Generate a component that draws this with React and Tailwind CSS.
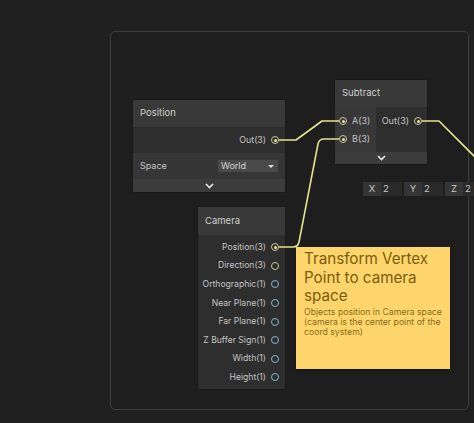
import React from 'react';

const font = { fontFamily: 'Inter, "Noto Sans", sans-serif' };

function Port({ kind = 'vec', connected = false }) {
    const ring = kind === 'vec' ? 'border-[#c9c98f]' : 'border-[#7fb8cc]';
    return (
        <span className={`w-[8px] h-[8px] rounded-full border-[1.5px] ${ring} flex items-center justify-center shrink-0`}>
            {connected && <span className="w-[3px] h-[3px] rounded-full bg-[#e4e4b0]" />}
        </span>
    );
}

function Chevron() {
    return (
        <svg width="9" height="6" viewBox="0 0 9 6">
            <polyline points="1,1 4.5,4.5 8,1" fill="none" stroke="#e8e8e8" strokeWidth="1.6" />
        </svg>
    );
}

function OutRow({ label, kind, connected, h = 'h-[18.6px]' }) {
    return (
        <div className={`flex items-center justify-end gap-[5px] pr-[6px] ${h}`}>
            <span className="text-[8.6px] text-[#c4c4c4]">{label}</span>
            <Port kind={kind} connected={connected} />
        </div>
    );
}

export default function App() {
    const cameraOuts = [
        ['Position(3)', 'vec', true],
        ['Direction(3)', 'vec', false],
        ['Orthographic(1)', 'f', false],
        ['Near Plane(1)', 'f', false],
        ['Far Plane(1)', 'f', false],
        ['Z Buffer Sign(1)', 'f', false],
        ['Width(1)', 'f', false],
        ['Height(1)', 'f', false],
    ];

    return (
        <div className="relative w-[474px] h-[423px] bg-[#202020] overflow-hidden" style={font}>
            {/* Grupo */}
            <div className="absolute left-[110px] top-[31px] w-[359px] h-[379px] rounded-[5px] border-[1.5px] border-[#3d3d3d] bg-[#1e1e1e]" />

            {/* Nodo Position */}
            <div className="absolute left-[133px] top-[100px] w-[152px] flex flex-col shadow-[0_0_0_1px_#1a1a1a]">
                <div className="h-[27px] bg-[#393939] flex items-center px-[7px] text-[9.5px] text-[#cfcfcf]">Position</div>
                <div className="h-[26px] bg-[#2e2e2e] flex items-center justify-end gap-[5px] pr-[6px]">
                    <span className="text-[8.8px] text-[#c4c4c4]">Out(3)</span>
                    <Port connected />
                </div>
                <div className="h-[26px] bg-[#363636] flex items-center justify-between pl-[7px] pr-[7px]">
                    <span className="text-[9px] text-[#c4c4c4]">Space</span>
                    <div className="w-[60px] h-[12px] bg-[#4a4a4a] flex items-center justify-between px-[3px]">
                        <span className="text-[9px] text-[#d4d4d4]">World</span>
                        <span className="w-0 h-0 border-l-[3px] border-r-[3px] border-t-[3px] border-l-transparent border-r-transparent border-t-[#dcdcdc] mr-[1px]" />
                    </div>
                </div>
                <div className="h-[13px] bg-[#3c3c3c] flex items-center justify-center"><Chevron /></div>
            </div>

            {/* Nodo Subtract */}
            <div className="absolute left-[335px] top-[80px] w-[92px] flex flex-col shadow-[0_0_0_1px_#1a1a1a]">
                <div className="h-[27px] bg-[#393939] flex items-center px-[7px] text-[9.5px] text-[#cfcfcf]">Subtract</div>
                <div className="h-[45px] flex">
                    <div className="w-[41px] bg-[#383838] flex flex-col pt-[5px]">
                        {['A(3)', 'B(3)'].map((l) => (
                            <div key={l} className="h-[18px] flex items-center gap-[5px] pl-[4px]">
                                <Port connected />
                                <span className="text-[9px] text-[#c4c4c4]">{l}</span>
                            </div>
                        ))}
                    </div>
                    <div className="flex-1 bg-[#2e2e2e] pt-[5px]">
                        <div className="h-[18px] flex items-center justify-end gap-[5px] pr-[5px]">
                            <span className="text-[9px] text-[#c4c4c4]">Out(3)</span>
                            <Port connected />
                        </div>
                    </div>
                </div>
                <div className="h-[12px] bg-[#3c3c3c] flex items-center justify-center"><Chevron /></div>
            </div>

            {/* Campo vector */}
            <div className="absolute left-[363px] top-[182px] flex gap-[2px] text-[9.5px] text-[#c8c8c8]">
                {['X', 'Y', 'Z'].map((a) => (
                    <div key={a} className="flex h-[14px]">
                        <span className="w-[18px] bg-[#353535] flex items-center justify-center">{a}</span>
                        <span className="w-[21px] bg-[#2a2a2a] flex items-center pl-[2px]">2</span>
                    </div>
                ))}
            </div>

            {/* Nodo Camera */}
            <div className="absolute left-[198px] top-[207px] w-[87px] flex flex-col shadow-[0_0_0_1px_#1a1a1a]">
                <div className="h-[28px] bg-[#393939] flex items-center px-[7px] text-[9.5px] text-[#cfcfcf]">Camera</div>
                <div className="bg-[#2e2e2e] pt-[3px] pb-[2px] flex flex-col">
                    {cameraOuts.map(([l, k, c]) => (
                        <OutRow key={l} label={l} kind={k} connected={c} />
                    ))}
                </div>
            </div>

            {/* Nota */}
            <div className="absolute left-[296px] top-[247px] w-[154px] h-[122px] bg-[#fdd56c] px-[8px] pt-[3px] shadow-[0_1px_2px_rgba(0,0,0,0.5)]">
                <p className="text-[15.2px] leading-[18.5px] text-[#7a5c0c]">Transform Vertex Point to camera space</p>
                <p className="text-[8.7px] leading-[10px] text-[#8c6c18] mt-[1px]">Objects position in Camera space (camera is the center point of the coord system)</p>
            </div>

            {/* Cables */}
            <svg className="absolute inset-0 pointer-events-none" width="474" height="423">
                <g fill="none" stroke="#e2e28e" strokeWidth="1.6" strokeLinejoin="round">
                    <path d="M279 140 L296 140 L322 121 L339 121" />
                    <path d="M279 247 L293 247 Q298 247 299 242 L318 144 Q319 139 324 139 L339 139" />
                    <path d="M422 121 L439 121 L476 158" />
                </g>
            </svg>
        </div>
    );
}
